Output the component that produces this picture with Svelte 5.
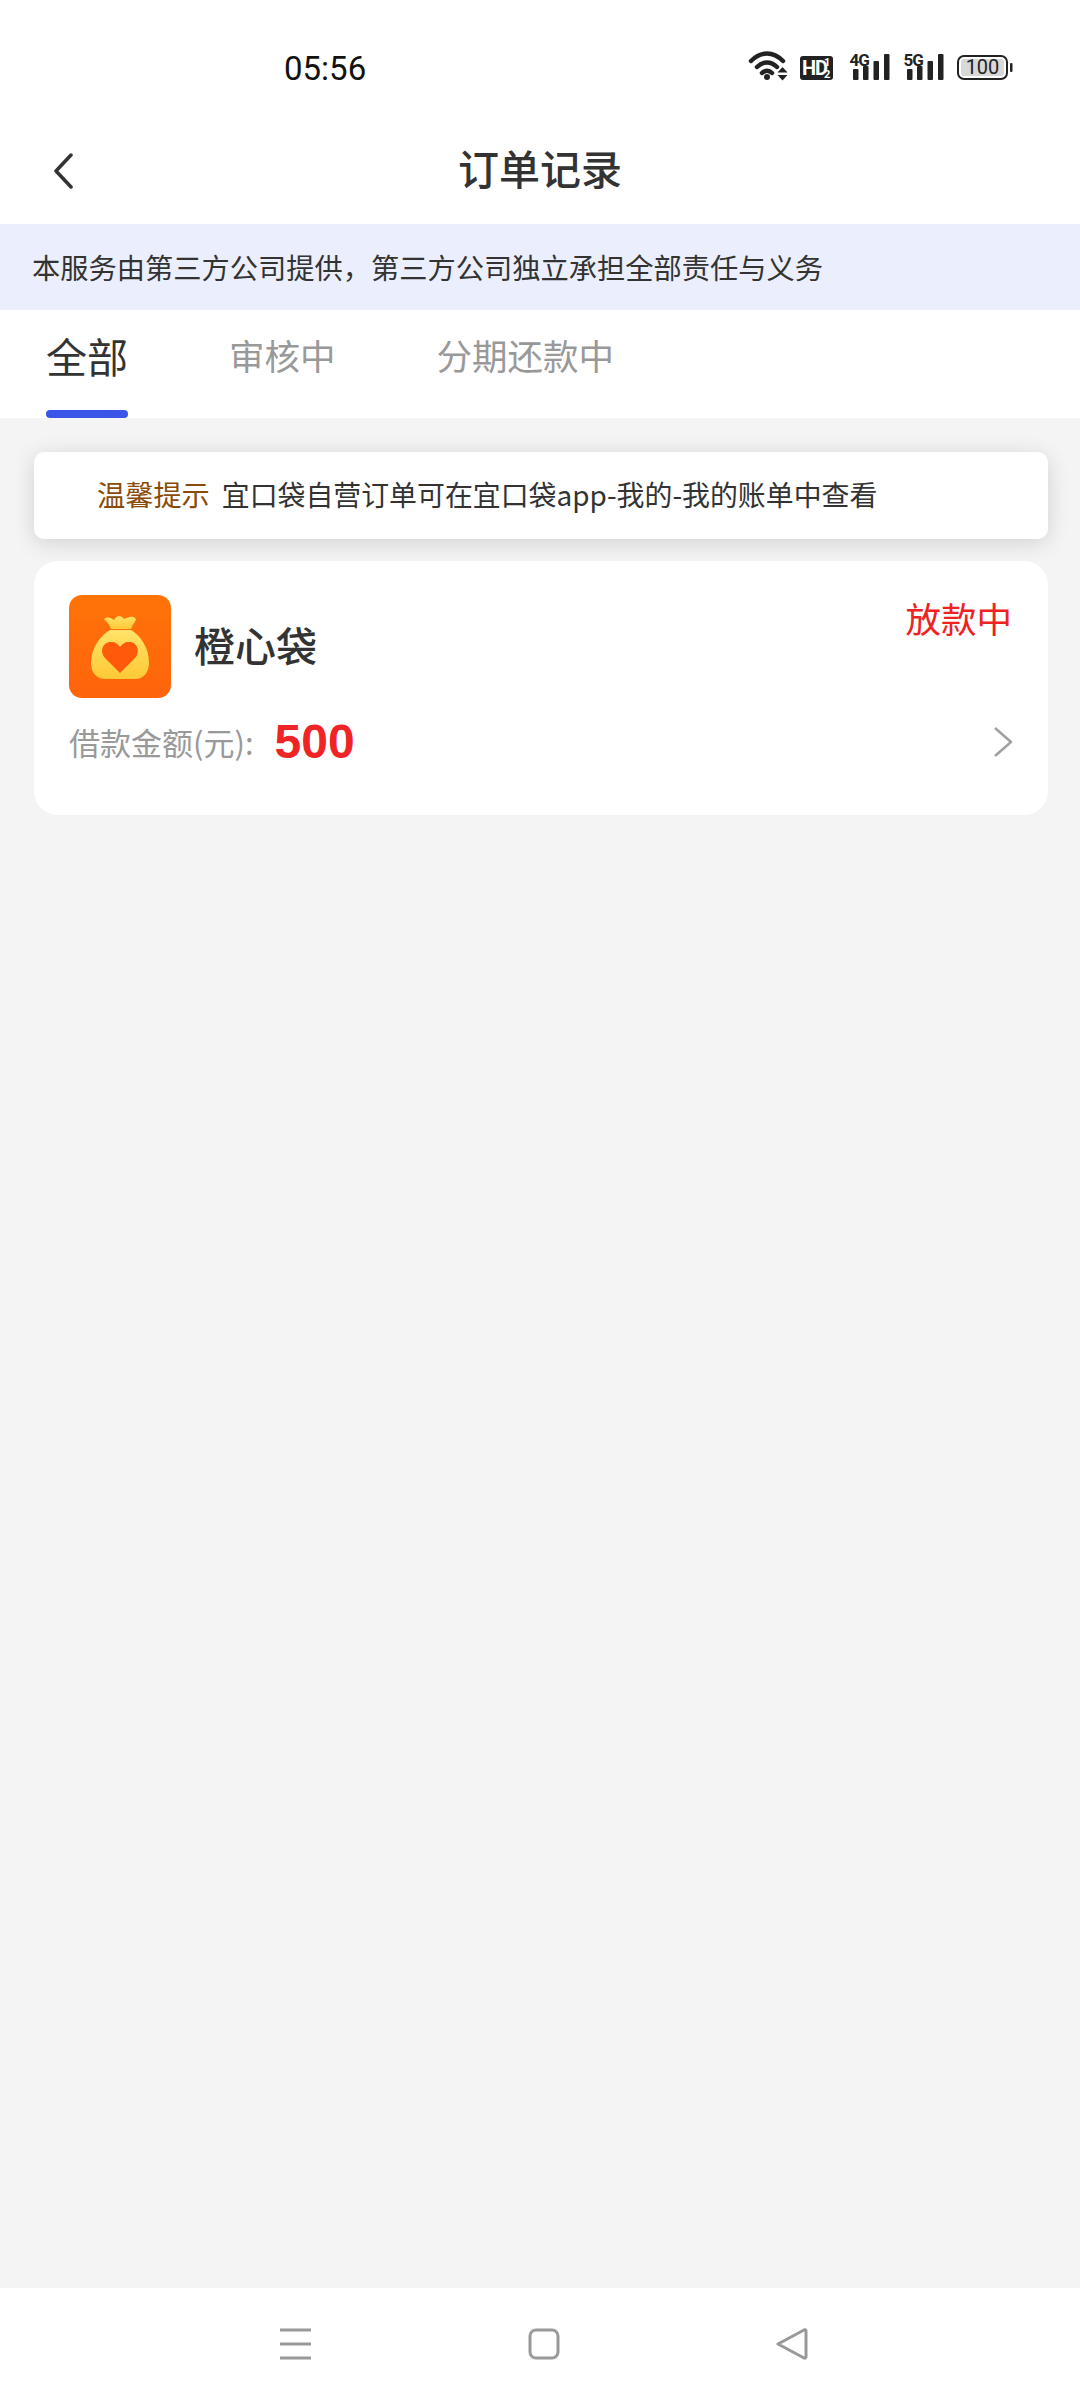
<script>
	const tabs = ['全部', '审核中', '分期还款中'];
	let active = 0;
</script>

<main>
	<header class="status">
		<span class="time">05:56</span>
		<svg class="status-icons" width="275" height="40" viewBox="745 48 275 40">
			<g fill="none" stroke="#222" stroke-width="4.500" stroke-linecap="round">
				<path d="M751 61 C761 51 773 51 783 61" />
				<path d="M757 67 C763 61 771 61 777 67" />
				<path d="M762 73 C765 70 769 70 772 73" />
			</g>
			<circle cx="767" cy="77" r="3" fill="#222" />
			<path d="M782.500 67 L787.500 72.500 H777.500 Z M777.500 75 H787.500 L782.500 80.500 Z" fill="#222" />

			<rect x="800" y="56" width="33" height="24" rx="3" fill="#222" />
			<text x="802" y="75" class="hd">HD</text>
			<text x="824" y="66" class="frac">1</text>
			<text x="824" y="78" class="frac">2</text>

			<text x="849.500" y="66" class="net">4G</text>
			<g fill="#222">
				<rect x="853" y="69" width="5.500" height="11" rx="1" />
				<rect x="863" y="66" width="5.500" height="14" rx="1" />
				<rect x="873.500" y="61" width="5.500" height="19" rx="1" />
				<rect x="884" y="54" width="5.500" height="26" rx="1" />
			</g>

			<text x="903.500" y="66" class="net">5G</text>
			<g fill="#222">
				<rect x="907" y="69" width="5.500" height="11" rx="1" />
				<rect x="917" y="66" width="5.500" height="14" rx="1" />
				<rect x="927.500" y="61" width="5.500" height="19" rx="1" />
				<rect x="938" y="54" width="5.500" height="26" rx="1" />
			</g>

			<rect x="958" y="56" width="49" height="23" rx="6" fill="none" stroke="#222" stroke-width="2" />
			<rect x="961" y="59" width="43" height="17" rx="3" fill="#d8d8d8" />
			<text x="982.500" y="74" class="batt">100</text>
			<rect x="1010" y="63" width="2.500" height="9" rx="1" fill="#222" />
		</svg>
	</header>

	<nav class="title-bar">
		<svg class="back" width="20" height="36" viewBox="0 0 20 36">
			<path d="M18 2 L3 18 L18 34" fill="none" stroke="#333" stroke-width="3.500" stroke-linecap="round" stroke-linejoin="round" />
		</svg>
		<h1>订单记录</h1>
	</nav>

	<div class="banner">本服务由第三方公司提供，第三方公司独立承担全部责任与义务</div>

	<div class="tabs">
		{#each tabs as tab, i}
			<div class="tab" class:active={i === active}>{tab}</div>
		{/each}
	</div>

	<section class="content">
		<div class="notice">
			<span class="notice-label">温馨提示</span>
			<span>宜口袋自营订单可在宜口袋app-我的-我的账单中查看</span>
		</div>

		<div class="card">
			<div class="card-top">
				<svg class="logo" width="102" height="103" viewBox="0 0 102 103">
					<defs>
						<linearGradient id="logoBg" x1="0" y1="0" x2="0" y2="1">
							<stop offset="0" stop-color="#ff7408" />
							<stop offset="1" stop-color="#ff630c" />
						</linearGradient>
						<linearGradient id="bag" x1="0" y1="0" x2="0" y2="1">
							<stop offset="0" stop-color="#ffe368" />
							<stop offset="1" stop-color="#ffc935" />
						</linearGradient>
					</defs>
					<rect width="102" height="103" rx="13" fill="url(#logoBg)" />
					<path d="M35 24 C39 21 42 23 45 25 C48 20 52 20 55 24 C59 22 64 20 67 24 C66 28 63 30 62 34 H42 C41 30 38 27 35 24 Z" fill="url(#bag)" />
					<path d="M41 35 H62 C72 41 80 53 80 68 C80 78 74 84 66 84 H36 C28 84 22 78 22 68 C22 53 31 41 41 35 Z" fill="url(#bag)" />
					<path d="M51 78 L36 63 C30 56 34 46 43 47 C47 47 49 49 51 52 C53 49 56 47 59 47 C68 46 72 56 66 63 Z" fill="#ff5a0a" />
				</svg>
				<span class="name">橙心袋</span>
				<span class="state">放款中</span>
			</div>
			<div class="card-bottom">
				<span class="amount-label">借款金额(元):</span>
				<span class="amount">500</span>
				<svg class="more" width="20" height="32" viewBox="0 0 20 32">
					<path d="M2 2 L18 16 L2 30" fill="none" stroke="#a0a0a0" stroke-width="2.500" stroke-linejoin="round" />
				</svg>
			</div>
		</div>
	</section>

	<footer class="sys-nav">
		<svg width="32" height="32" viewBox="0 0 32 32">
			<path d="M0 2 H31 M0 16 H31 M0 30 H31" stroke="#999" stroke-width="3" />
		</svg>
		<svg width="32" height="32" viewBox="0 0 32 32">
			<rect x="2" y="2" width="28" height="28" rx="6" fill="none" stroke="#999" stroke-width="3" />
		</svg>
		<svg width="32" height="32" viewBox="0 0 32 32">
			<path d="M2 16 L28 2 C29.500 1.500 30 2 30 3.500 V28.500 C30 30 29 30.500 28 30 Z" fill="none" stroke="#999" stroke-width="3" stroke-linejoin="round" />
		</svg>
	</footer>
</main>

<style>
	:global(body) {
		background: #f4f4f4;
	}

	main {
		display: flex;
		flex-direction: column;
		height: 2400px;
		font-family: 'Noto Sans CJK SC', 'Noto Sans', sans-serif;
		color: #333;
	}

	.status {
		height: 124px;
		background: #fff;
		display: flex;
		align-items: flex-start;
		justify-content: space-between;
		padding: 48px 60px 0 284px;
		box-sizing: border-box;
	}

	.time {
		font-family: Roboto, sans-serif;
		font-size: 33px;
		line-height: 42px;
		color: #111;
	}

	.status-icons text {
		font-family: Roboto, sans-serif;
		fill: #222;
	}

	.status-icons .hd {
		font-size: 20px;
		font-weight: 700;
		fill: #fff;
		letter-spacing: -1px;
	}

	.status-icons .frac {
		font-size: 11px;
		font-weight: 700;
		fill: #fff;
	}

	.status-icons .net {
		font-size: 17px;
		font-weight: 700;
		letter-spacing: -1px;
	}

	.status-icons .batt {
		font-size: 20px;
		text-anchor: middle;
	}

	.title-bar {
		height: 100px;
		box-sizing: border-box;
		padding-bottom: 12px;
		background: #fff;
		display: flex;
		align-items: center;
		justify-content: center;
		position: relative;
	}

	.back {
		position: absolute;
		left: 53px;
		top: 29px;
	}

	h1 {
		margin: 0;
		font-size: 41px;
		font-weight: 500;
		line-height: 1.2;
	}

	.banner {
		height: 86px;
		box-sizing: border-box;
		padding: 0 0 2px 32px;
		background: #ebeefc;
		display: flex;
		align-items: center;
		font-size: 28.250px;
	}

	.tabs {
		height: 108px;
		background: #fff;
		display: flex;
		gap: 101px;
		padding-left: 46px;
	}

	.tab {
		font-size: 35.500px;
		line-height: 52px;
		padding-top: 19px;
		color: #999;
		position: relative;
	}

	.tab.active {
		font-size: 41px;
		color: #333;
	}

	.tab.active::after {
		content: '';
		position: absolute;
		left: 0;
		right: 0;
		bottom: 0;
		height: 8px;
		border-radius: 4px;
		background: #3a55e8;
	}

	.content {
		flex: 1;
		padding: 34px 32px 0 34px;
		display: flex;
		flex-direction: column;
		gap: 22px;
		background: #f4f4f4;
	}

	.notice {
		height: 87px;
		box-sizing: border-box;
		padding: 0 0 4px 63px;
		background: #fff;
		border-radius: 10px;
		box-shadow: 0 4px 22px rgba(0, 0, 0, 0.14);
		display: flex;
		align-items: center;
		gap: 12px;
		font-size: 27.900px;
	}

	.notice-label {
		color: #8a4b08;
		font-size: 28.200px;
	}

	.card {
		height: 254px;
		background: #fff;
		border-radius: 24px;
		padding: 34px 36px 0 35px;
		box-sizing: border-box;
	}

	.card-top {
		display: flex;
		align-items: center;
		position: relative;
	}

	.name {
		font-size: 41px;
		font-weight: 500;
		margin: 0 0 6px 23px;
	}

	.state {
		position: absolute;
		right: 0;
		top: -2px;
		font-size: 35.500px;
		line-height: 50px;
		color: #ee2222;
	}

	.card-bottom {
		display: flex;
		align-items: center;
		margin-top: 14px;
		height: 58px;
	}

	.amount-label {
		font-size: 31px;
		color: #999;
	}

	.amount {
		font-family: 'Liberation Sans', sans-serif;
		font-size: 48px;
		font-weight: 700;
		color: #f02326;
		margin-left: 21px;
	}

	.more {
		margin: 2px -1px 0 auto;
	}

	.sys-nav {
		height: 112px;
		background: #fff;
		display: flex;
		align-items: center;
		gap: 216px;
		padding-left: 280px;
		box-sizing: border-box;
	}
</style>
